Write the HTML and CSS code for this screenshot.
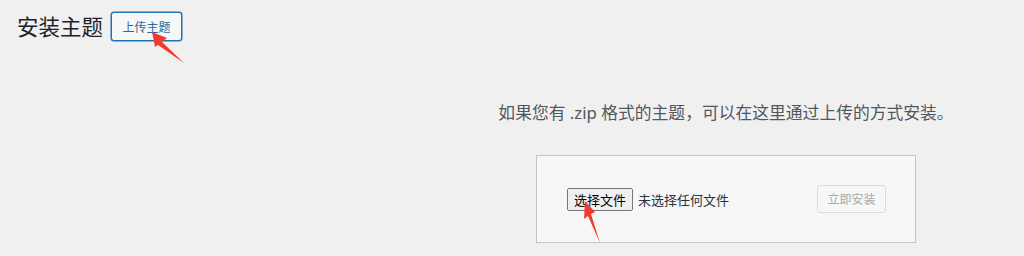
FILE: index.html
```html
<!DOCTYPE html>
<html lang="zh-CN">
<head>
    <meta charset="UTF-8">
    <meta name="viewport" content="width=device-width, initial-scale=1.0">
    <title>安装主题</title>
    <link rel="stylesheet" href="styles.css">
</head>
<body>
    <div class="wrap">
        <div class="page-header">
            <h1 class="page-title">安装主题</h1>
            <button type="button" class="title-action">上传主题</button>
        </div>

        <div class="upload-area">
            <p class="install-help">如果您有 .zip 格式的主题，可以在这里通过上传的方式安装。</p>
            <form class="upload-form">
                <div class="file-field">
                    <label class="file-button" for="themezip">选择文件</label>
                    <input type="file" id="themezip" name="themezip" class="file-input">
                    <span class="file-name">未选择任何文件</span>
                </div>
                <button type="submit" class="install-button" disabled>立即安装</button>
            </form>
        </div>
    </div>

    <svg class="arrows" width="1024" height="256" viewBox="0 0 1024 256">
        <polygon points="152,32 167,38 162,42 184,63 158,45 155,47" fill="#f23b2f"/>
        <polygon points="585,201 595,212 591,214 600,243 588,216 584,219" fill="#f23b2f"/>
    </svg>
</body>
</html>
```

FILE: styles.css
```css
body {
    margin: 0;
    padding: 0;
    background-color: #f0f0f1;
    font-family: "Noto Sans", "Noto Sans CJK SC", sans-serif;
    color: #3c434a;
    position: relative;
    height: 256px;
    overflow: hidden;
}
.wrap {
    padding: 12px 0 0 17px;
}
.page-header {
    display: flex;
    align-items: center;
    gap: 8px;
}
.page-title {
    margin: 0;
    font-size: 21.5px;
    font-weight: 400;
    line-height: 29px;
    color: #1d2327;
}
.title-action {
    width: 71px;
    height: 29px;
    padding: 0;
    font-family: inherit;
    font-size: 12px;
    color: #2b6aa0;
    background-color: #f6f7f7;
    border: 1px solid #2271b1;
    border-radius: 3px;
    box-shadow: 0 0 0 0.5px #2271b1;
    cursor: pointer;
}
.upload-area {
    width: 380px;
    margin: 59px 0 0 519px;
    display: flex;
    flex-direction: column;
    align-items: center;
}
.install-help {
    margin: 0 0 30px;
    white-space: nowrap;
    font-size: 16.8px;
    line-height: 25px;
    color: #50575e;
}
.upload-form {
    box-sizing: border-box;
    width: 380px;
    height: 88px;
    padding: 0 29px 0 30px;
    display: flex;
    align-items: center;
    justify-content: space-between;
    background-color: #f6f7f7;
    border: 1px solid #c3c4c7;
}
.file-field {
    display: flex;
    align-items: center;
    gap: 5px;
}
.file-input {
    display: none;
}
.file-button {
    box-sizing: border-box;
    width: 66px;
    height: 23px;
    display: flex;
    align-items: center;
    justify-content: center;
    font-size: 13px;
    color: #000;
    background-color: #efefef;
    border: 1px solid #767676;
    border-radius: 2px;
}
.file-name {
    font-size: 13px;
    color: #2c3338;
}
.install-button {
    width: 69px;
    height: 28px;
    padding: 0;
    font-family: inherit;
    font-size: 12px;
    color: #a7aaad;
    background-color: #f6f7f7;
    border: 1px solid #dcdcde;
    border-radius: 3px;
}
.arrows {
    position: absolute;
    left: 0;
    top: 0;
    pointer-events: none;
}
```
